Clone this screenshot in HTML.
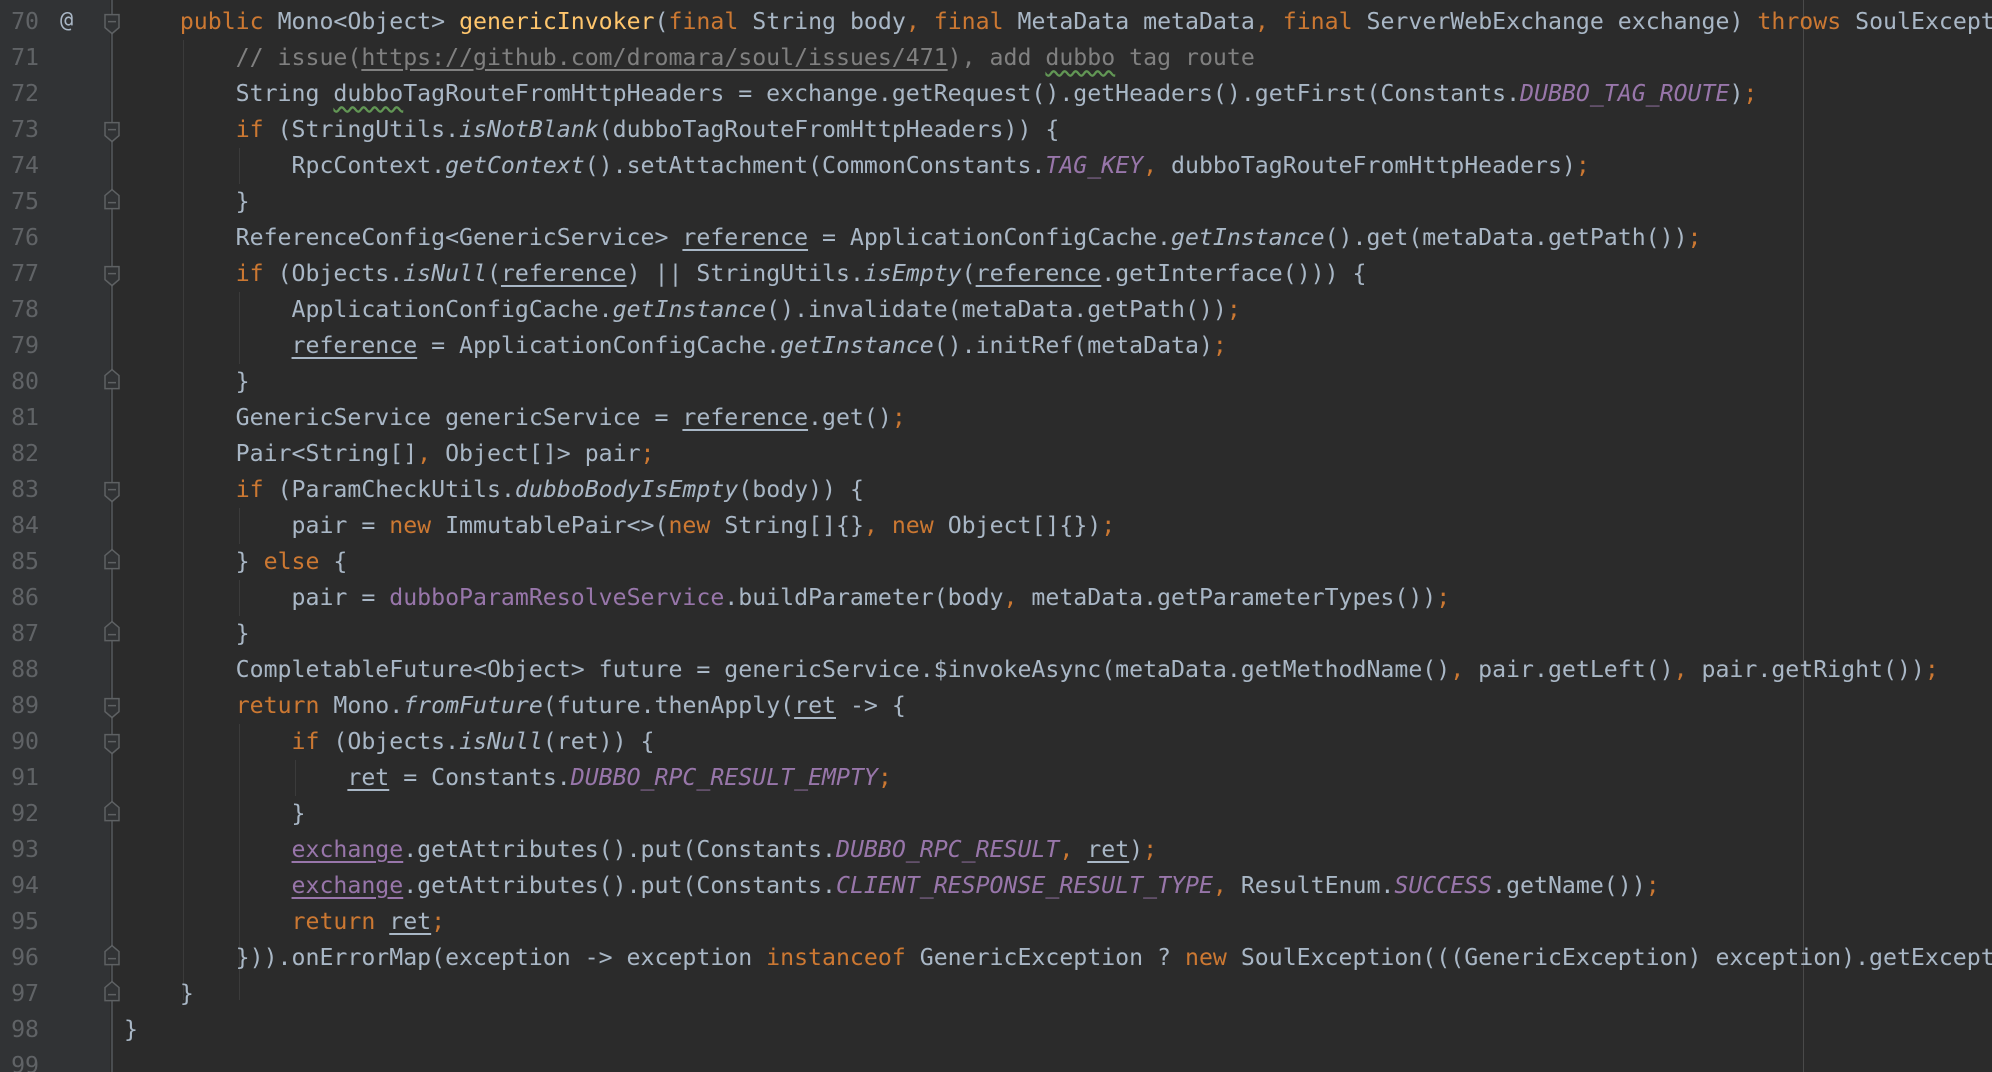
<!DOCTYPE html>
<html><head><meta charset="utf-8"><style>
html,body{margin:0;padding:0;}
body{width:1992px;height:1072px;overflow:hidden;background:#2b2b2b;position:relative;font-family:"DejaVu Sans Mono","Liberation Mono",monospace;font-size:23.2px;color:#a9b7c6;}
#wrap{position:absolute;left:0;top:0;width:1992px;height:1072px;overflow:hidden;}
#gut{position:absolute;left:0;top:0;width:110px;height:1072px;background:#313335;}
#foldline{position:absolute;left:111px;top:0;width:2px;height:1072px;background:#4a4d50;}
#margin{position:absolute;left:1803px;top:0;width:1px;height:1072px;background:#4a4a4a;}
.g{position:absolute;width:1px;background:#3b3b3b;}
.ln{position:absolute;left:0;width:39px;text-align:right;color:#606366;line-height:36px;height:36px;}
.cl{position:absolute;left:124px;white-space:pre;line-height:36px;height:36px;}
.k{color:#cc7832}
.s{font-style:italic}
.c{color:#9876aa;font-style:italic}
.f{color:#9876aa}
.m{color:#ffc66d}
.cm{color:#808080}
.u{text-decoration:underline;text-underline-offset:4px}
.w{text-decoration:underline wavy #629755;text-underline-offset:5px}
.at{position:absolute;left:60px;color:#a9b7c6;line-height:36px;font-size:22px}
</style></head><body><div id="wrap">
<div id="gut"></div>
<div id="foldline"></div>
<div id="margin"></div>
<div class="g" style="left:183px;top:40px;height:960px"></div>
<div class="g" style="left:239px;top:148px;height:36px"></div>
<div class="g" style="left:239px;top:292px;height:72px"></div>
<div class="g" style="left:239px;top:508px;height:36px"></div>
<div class="g" style="left:239px;top:580px;height:36px"></div>
<div class="g" style="left:239px;top:724px;height:276px"></div>
<div class="g" style="left:295px;top:760px;height:36px"></div>

<div class="at" style="top:3px">@</div>

<svg width="130" height="1072" style="position:absolute;left:0;top:0">
<g fill="#313335" stroke="#5e6163" stroke-width="1.5">
<path d="M105 14.6h14v13l-7 6l-7-6z"/>
<path d="M105 122.6h14v13l-7 6l-7-6z"/>
<path d="M105 266.6h14v13l-7 6l-7-6z"/>
<path d="M105 482.6h14v13l-7 6l-7-6z"/>
<path d="M105 698.6h14v13l-7 6l-7-6z"/>
<path d="M105 734.6h14v13l-7 6l-7-6z"/>
<path d="M105 195.6l7-6l7 6v13h-14z"/>
<path d="M105 375.6l7-6l7 6v13h-14z"/>
<path d="M105 555.6l7-6l7 6v13h-14z"/>
<path d="M105 627.6l7-6l7 6v13h-14z"/>
<path d="M105 807.6l7-6l7 6v13h-14z"/>
<path d="M105 951.6l7-6l7 6v13h-14z"/>
<path d="M105 987.6l7-6l7 6v13h-14z"/>
</g>
<g stroke="#5e6163" stroke-width="1.5">
<path d="M108 21.6h8M108 129.6h8M108 273.6h8M108 489.6h8M108 705.6h8M108 741.6h8M108 202.6h8M108 382.6h8M108 562.6h8M108 634.6h8M108 814.6h8M108 958.6h8M108 994.6h8"/>
</g>
</svg>

<div class="ln" style="top:3.6px">70</div>
<div class="ln" style="top:39.6px">71</div>
<div class="ln" style="top:75.6px">72</div>
<div class="ln" style="top:111.6px">73</div>
<div class="ln" style="top:147.6px">74</div>
<div class="ln" style="top:183.6px">75</div>
<div class="ln" style="top:219.6px">76</div>
<div class="ln" style="top:255.6px">77</div>
<div class="ln" style="top:291.6px">78</div>
<div class="ln" style="top:327.6px">79</div>
<div class="ln" style="top:363.6px">80</div>
<div class="ln" style="top:399.6px">81</div>
<div class="ln" style="top:435.6px">82</div>
<div class="ln" style="top:471.6px">83</div>
<div class="ln" style="top:507.6px">84</div>
<div class="ln" style="top:543.6px">85</div>
<div class="ln" style="top:579.6px">86</div>
<div class="ln" style="top:615.6px">87</div>
<div class="ln" style="top:651.6px">88</div>
<div class="ln" style="top:687.6px">89</div>
<div class="ln" style="top:723.6px">90</div>
<div class="ln" style="top:759.6px">91</div>
<div class="ln" style="top:795.6px">92</div>
<div class="ln" style="top:831.6px">93</div>
<div class="ln" style="top:867.6px">94</div>
<div class="ln" style="top:903.6px">95</div>
<div class="ln" style="top:939.6px">96</div>
<div class="ln" style="top:975.6px">97</div>
<div class="ln" style="top:1011.6px">98</div>
<div class="ln" style="top:1047.6px">99</div>

<div class="cl" style="top:3.6px">    <span class="k">public </span>Mono&lt;Object&gt; <span class="m">genericInvoker</span>(<span class="k">final </span>String body<span class="k">, final </span>MetaData metaData<span class="k">, final </span>ServerWebExchange exchange) <span class="k">throws </span>SoulExcept</div>
<div class="cl cm" style="top:39.6px">        // issue(<span class="u">https://github.com/dromara/soul/issues/471</span>), add <span class="w">dubbo</span> tag route</div>
<div class="cl" style="top:75.6px">        String <span class="w">dubbo</span>TagRouteFromHttpHeaders = exchange.getRequest().getHeaders().getFirst(Constants.<span class="c">DUBBO_TAG_ROUTE</span>)<span class="k">;</span></div>
<div class="cl" style="top:111.6px">        <span class="k">if </span>(StringUtils.<span class="s">isNotBlank</span>(dubboTagRouteFromHttpHeaders)) {</div>
<div class="cl" style="top:147.6px">            RpcContext.<span class="s">getContext</span>().setAttachment(CommonConstants.<span class="c">TAG_KEY</span><span class="k">, </span>dubboTagRouteFromHttpHeaders)<span class="k">;</span></div>
<div class="cl" style="top:183.6px">        }</div>
<div class="cl" style="top:219.6px">        ReferenceConfig&lt;GenericService&gt; <span class="u">reference</span> = ApplicationConfigCache.<span class="s">getInstance</span>().get(metaData.getPath())<span class="k">;</span></div>
<div class="cl" style="top:255.6px">        <span class="k">if </span>(Objects.<span class="s">isNull</span>(<span class="u">reference</span>) || StringUtils.<span class="s">isEmpty</span>(<span class="u">reference</span>.getInterface())) {</div>
<div class="cl" style="top:291.6px">            ApplicationConfigCache.<span class="s">getInstance</span>().invalidate(metaData.getPath())<span class="k">;</span></div>
<div class="cl" style="top:327.6px">            <span class="u">reference</span> = ApplicationConfigCache.<span class="s">getInstance</span>().initRef(metaData)<span class="k">;</span></div>
<div class="cl" style="top:363.6px">        }</div>
<div class="cl" style="top:399.6px">        GenericService genericService = <span class="u">reference</span>.get()<span class="k">;</span></div>
<div class="cl" style="top:435.6px">        Pair&lt;String[]<span class="k">, </span>Object[]&gt; pair<span class="k">;</span></div>
<div class="cl" style="top:471.6px">        <span class="k">if </span>(ParamCheckUtils.<span class="s">dubboBodyIsEmpty</span>(body)) {</div>
<div class="cl" style="top:507.6px">            pair = <span class="k">new </span>ImmutablePair&lt;&gt;(<span class="k">new </span>String[]{}<span class="k">, new </span>Object[]{})<span class="k">;</span></div>
<div class="cl" style="top:543.6px">        } <span class="k">else </span>{</div>
<div class="cl" style="top:579.6px">            pair = <span class="f">dubboParamResolveService</span>.buildParameter(body<span class="k">, </span>metaData.getParameterTypes())<span class="k">;</span></div>
<div class="cl" style="top:615.6px">        }</div>
<div class="cl" style="top:651.6px">        CompletableFuture&lt;Object&gt; future = genericService.$invokeAsync(metaData.getMethodName()<span class="k">, </span>pair.getLeft()<span class="k">, </span>pair.getRight())<span class="k">;</span></div>
<div class="cl" style="top:687.6px">        <span class="k">return </span>Mono.<span class="s">fromFuture</span>(future.thenApply(<span class="u">ret</span> -&gt; {</div>
<div class="cl" style="top:723.6px">            <span class="k">if </span>(Objects.<span class="s">isNull</span>(ret)) {</div>
<div class="cl" style="top:759.6px">                <span class="u">ret</span> = Constants.<span class="c">DUBBO_RPC_RESULT_EMPTY</span><span class="k">;</span></div>
<div class="cl" style="top:795.6px">            }</div>
<div class="cl" style="top:831.6px">            <span class="f u">exchange</span>.getAttributes().put(Constants.<span class="c">DUBBO_RPC_RESULT</span><span class="k">, </span><span class="u">ret</span>)<span class="k">;</span></div>
<div class="cl" style="top:867.6px">            <span class="f u">exchange</span>.getAttributes().put(Constants.<span class="c">CLIENT_RESPONSE_RESULT_TYPE</span><span class="k">, </span>ResultEnum.<span class="c">SUCCESS</span>.getName())<span class="k">;</span></div>
<div class="cl" style="top:903.6px">            <span class="k">return </span><span class="u">ret</span><span class="k">;</span></div>
<div class="cl" style="top:939.6px">        })).onErrorMap(exception -&gt; exception <span class="k">instanceof </span>GenericException ? <span class="k">new </span>SoulException(((GenericException) exception).getExcept</div>
<div class="cl" style="top:975.6px">    }</div>
<div class="cl" style="top:1011.6px">}</div>
</div></body></html>
